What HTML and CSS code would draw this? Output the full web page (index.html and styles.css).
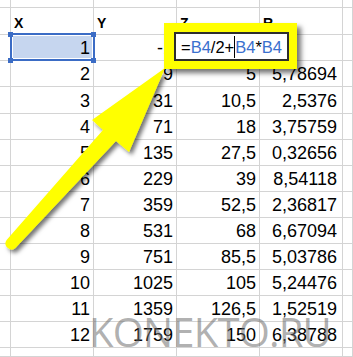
FILE: index.html
```html
<!DOCTYPE html>
<html>
<head>
<meta charset="utf-8">
<link rel="stylesheet" href="styles.css">
</head>
<body>
<div class="page">
  <div class="sheet">
    <div class="c"></div><div class="c"></div><div class="c"></div><div class="c"></div><div class="c"></div><div class="c"></div>

    <div class="c"></div><div class="c h">X</div><div class="c h">Y</div><div class="c h">Z</div><div class="c h">R</div><div class="c"></div>

    <div class="c"></div><div class="c n sel">1</div><div class="c n">-1</div><div class="c n"></div><div class="c n r"></div><div class="c"></div>
    <div class="c"></div><div class="c n">2</div><div class="c n">9</div><div class="c n">5</div><div class="c n r">5,78694</div><div class="c"></div>
    <div class="c"></div><div class="c n">3</div><div class="c n">31</div><div class="c n">10,5</div><div class="c n r">2,5376</div><div class="c"></div>
    <div class="c"></div><div class="c n">4</div><div class="c n">71</div><div class="c n">18</div><div class="c n r">3,75759</div><div class="c"></div>
    <div class="c"></div><div class="c n">5</div><div class="c n">135</div><div class="c n">27,5</div><div class="c n r">0,32656</div><div class="c"></div>
    <div class="c"></div><div class="c n">6</div><div class="c n">229</div><div class="c n">39</div><div class="c n r">8,54118</div><div class="c"></div>
    <div class="c"></div><div class="c n">7</div><div class="c n">359</div><div class="c n">52,5</div><div class="c n r">2,36817</div><div class="c"></div>
    <div class="c"></div><div class="c n">8</div><div class="c n">531</div><div class="c n">68</div><div class="c n r">6,67094</div><div class="c"></div>
    <div class="c"></div><div class="c n">9</div><div class="c n">751</div><div class="c n">85,5</div><div class="c n r">5,03786</div><div class="c"></div>
    <div class="c"></div><div class="c n">10</div><div class="c n">1025</div><div class="c n">105</div><div class="c n r">5,24476</div><div class="c"></div>
    <div class="c"></div><div class="c n">11</div><div class="c n">1359</div><div class="c n">126,5</div><div class="c n r">1,52519</div><div class="c"></div>
    <div class="c"></div><div class="c n">12</div><div class="c n">1759</div><div class="c n">150</div><div class="c n r">6,38788</div><div class="c"></div>

    <div class="c"></div><div class="c"></div><div class="c"></div><div class="c"></div><div class="c"></div><div class="c"></div>
  </div>

  <svg class="arrow" width="353" height="357" viewBox="0 0 353 357">
    <defs>
      <filter id="sh" x="-20%" y="-20%" width="140%" height="140%">
        <feDropShadow dx="3" dy="3" stdDeviation="2" flood-color="#000" flood-opacity="0.55"/>
      </filter>
    </defs>
    <path filter="url(#sh)" fill="#ffff00" d="M165,68 L129,152 L116,141 L15.4,248 A6,6 0 0 1 6.6,240 L103,130 L92,120 Z"/>
  </svg>

  <div class="callout">
    <div class="editbox"><span class="k">=</span><span class="ref">B4</span><span class="k">/2+</span><span class="caret"></span><span class="ref">B4</span><span class="k">*</span><span class="ref">B4</span></div>
  </div>

  <div class="watermark">KONEKTO.RU</div>
</div>
</body>
</html>
```

FILE: styles.css
```css
* { box-sizing: border-box; }
html, body { margin: 0; padding: 0; background: #fff; }
.page {
  position: relative;
  width: 353px;
  height: 357px;
  overflow: hidden;
}
.sheet {
  display: grid;
  grid-template-columns: 11px 83px 83px 83px 83px 1fr;
  grid-template-rows: 8px 27px 26px 26px 27px repeat(9, 26px) 1fr;
  height: 357px;
  font-family: "Liberation Sans", Arial, sans-serif;
  color: #000;
}
.c {
  border-right: 1px solid #d4d4d4;
  border-bottom: 1px solid #d4d4d4;
  display: flex;
  align-items: flex-end;
  min-width: 0;
}
.h {
  font-weight: bold;
  font-size: 14px;
  line-height: 14px;
  padding: 0 0 4px 3px;
}
.n {
  justify-content: flex-end;
  font-size: 18px;
  line-height: 18px;
  padding: 0 3px 3px 0;
}
.n.r { padding-right: 5px; }
.sel {
  position: relative;
  background: #c6d6ef;
}
.sel::before {
  content: "";
  position: absolute;
  left: -1px; top: -2px; right: -2px; bottom: -1px;
  border: 2px solid #3b6cc5;
  box-shadow: inset 0 0 0 1px #fff;
}
.sel::after {
  content: "";
  position: absolute;
  left: -3px; top: -3px;
  width: 5px; height: 5px;
  background: #3b6cc5;
  box-shadow: 83px 0 0 #3b6cc5, 0 26px 0 #3b6cc5, 83px 26px 0 #3b6cc5;
}
.arrow {
  position: absolute;
  left: 0; top: 0;
}
.callout {
  position: absolute;
  left: 164px; top: 23px;
  width: 133px; height: 46px;
  background: #ffff00;
  box-shadow: 4px 4px 5px rgba(0,0,0,0.55);
  padding: 9px 0 0 10px;
}
.editbox {
  width: 115px;
  height: 29px;
  border: 2px solid #2e2e2e;
  background: #fff;
  display: flex;
  align-items: center;
  padding-left: 5px;
  font-family: "Liberation Sans", Arial, sans-serif;
  font-size: 16.5px;
  line-height: 18px;
  white-space: nowrap;
}
.k { color: #000; }
.ref { color: #3a6fce; }
.caret {
  display: inline-block;
  width: 1px;
  height: 22px;
  background: #000;
}
.watermark {
  position: absolute;
  left: 89px; top: 310px;
  font-family: "Open Sans", "Liberation Sans", sans-serif;
  font-size: 40px;
  line-height: 44px;
  letter-spacing: -0.8px;
  color: rgba(110,110,110,0.55);
  white-space: nowrap;
}
```
